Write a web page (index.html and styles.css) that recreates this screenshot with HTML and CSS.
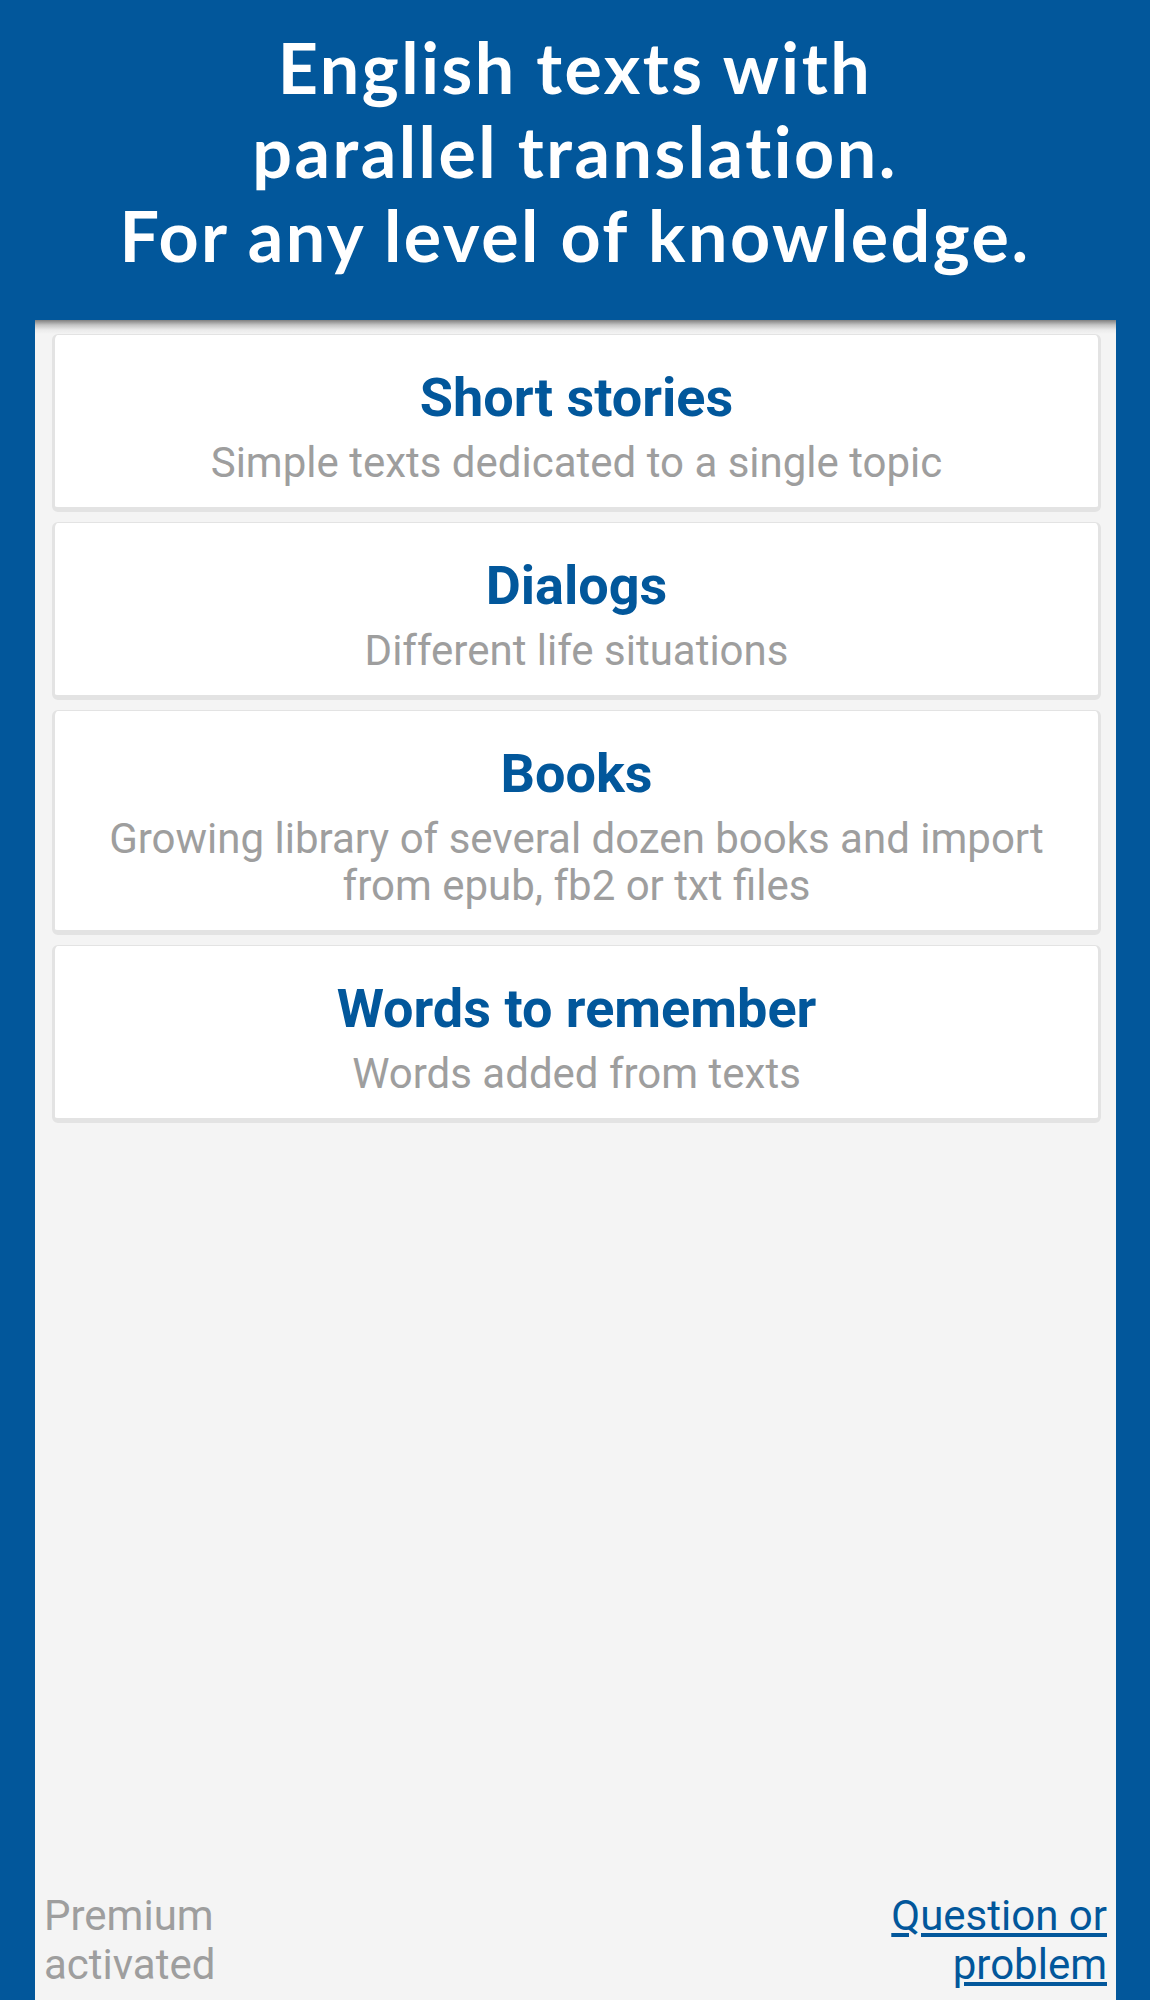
FILE: index.html
```html
<!DOCTYPE html>
<html lang="en">
<head>
	<meta charset="UTF-8">
	<title>English texts</title>
	<link rel="stylesheet" href="styles.css">
</head>
<body>
<div class="header">
	<h1 class="slogan">English texts with<br>parallel translation.<br>For any level of knowledge.</h1>
</div>
<div class="panel">
	<div class="menu">
		<a class="card" href="#">
			<div class="card-title">Short stories</div>
			<div class="card-text">Simple texts dedicated to a single topic</div>
		</a>
		<a class="card" href="#">
			<div class="card-title">Dialogs</div>
			<div class="card-text">Different life situations</div>
		</a>
		<a class="card" href="#">
			<div class="card-title">Books</div>
			<div class="card-text">Growing library of several dozen books and import from epub, fb2 or txt files</div>
		</a>
		<a class="card" href="#">
			<div class="card-title">Words to remember</div>
			<div class="card-text">Words added from texts</div>
		</a>
	</div>
	<div class="footer">
		<span class="premium">Premium<br>activated</span>
		<a class="help" href="#">Question or<br>problem</a>
	</div>
</div>
</body>
</html>
```

FILE: styles.css
```css
html, body {
	margin: 0;
	height: 2000px;
}
body {
	background: #02579b;
	display: flex;
	flex-direction: column;
	overflow: hidden;
	font-family: Roboto, "Liberation Sans", sans-serif;
}

/* header */
.header {
	padding: 25px 0 43px;
	text-align: center;
}
.slogan {
	margin: 0;
	color: #fff;
	font: bold 70px/84px Lato, "DejaVu Sans", sans-serif;
	letter-spacing: 2.5px;
}

/* grey panel */
.panel {
	flex: 1;
	margin: 0 34px 0 35px;
	display: flex;
	flex-direction: column;
	background: linear-gradient(#7f7f7f 0, #c4c4c4 5px, #ebebeb 10px, #f4f4f4 14px);
}
.menu {
	padding: 14px 15px 0 17px;
}
.card {
	display: block;
	margin-bottom: 10px;
	padding: 31px 40px 21px;
	background: #fff;
	border: 3px solid #e3e3e3;
	border-top-width: 1px;
	border-bottom-width: 5px;
	border-radius: 6px;
	text-align: center;
	text-decoration: none;
}
.card-title {
	color: #02579b;
	font-size: 54px;
	font-weight: bold;
	line-height: 64px;
}
.card-text {
	margin-top: 9px;
	color: #9e9e9e;
	font-size: 42px;
	line-height: 47px;
}

/* footer */
.footer {
	margin-top: auto;
	display: flex;
	justify-content: space-between;
	align-items: flex-end;
	padding: 0 9px 11px;
	font-size: 42px;
	line-height: 49px;
}
.premium {
	color: #9e9e9e;
}
.help {
	color: #02579b;
	text-align: right;
}
```
